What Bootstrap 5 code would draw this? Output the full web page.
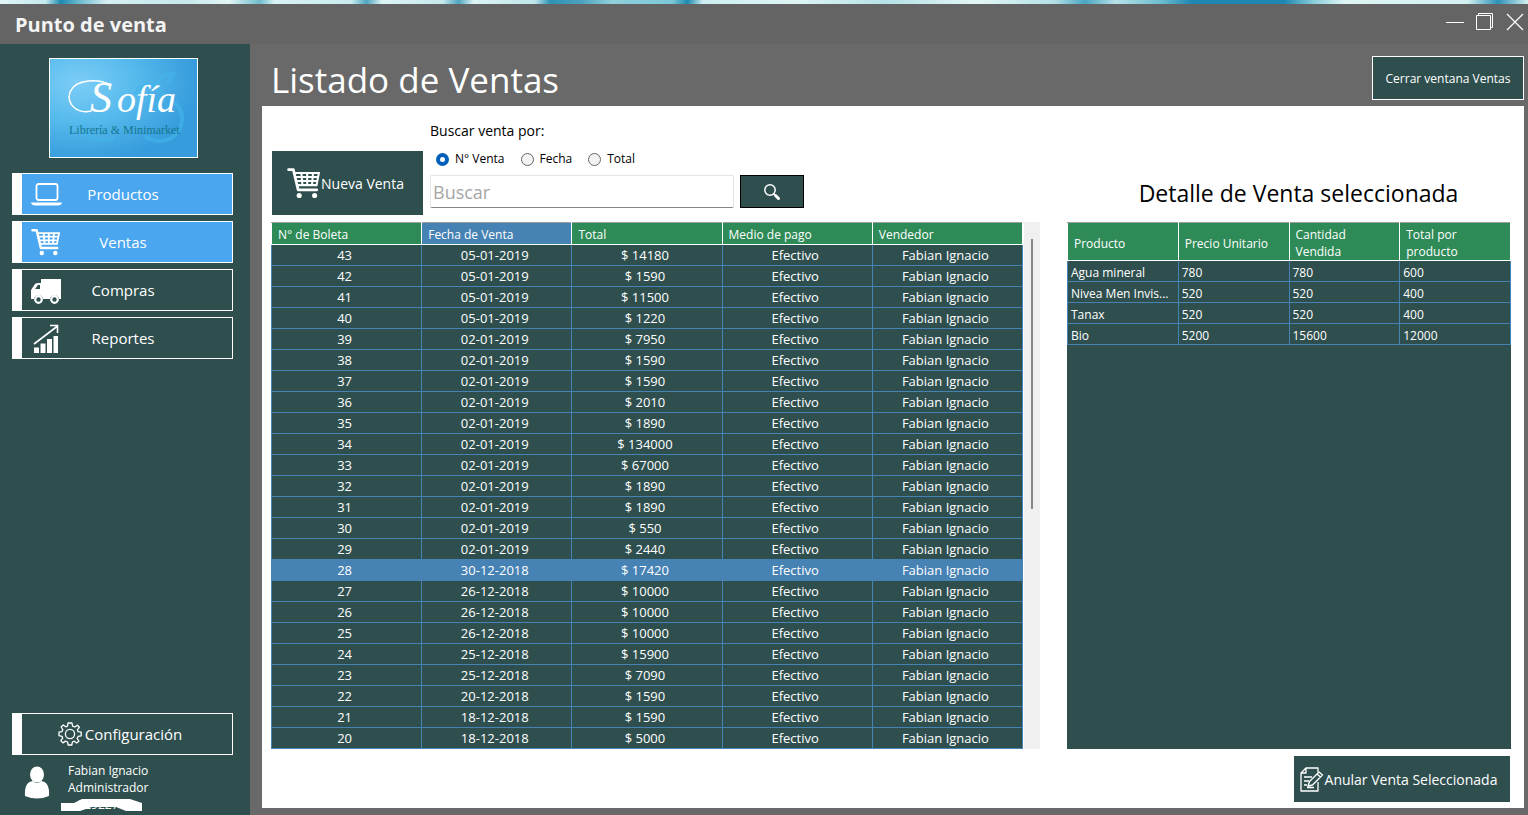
<!DOCTYPE html>
<html lang="es">
<head>
<meta charset="utf-8">
<meta name="viewport" content="width=device-width, initial-scale=1">
<title>Punto de venta</title>
<link href="https://cdn.jsdelivr.net/npm/bootstrap@5.3.0/dist/css/bootstrap.min.css" rel="stylesheet">
<style>
:root{--slate:#2f4f4f;--steel:#4682b4;--sea:#2e8b57;--dim:#696969}
body{font-family:"Open Sans","Noto Sans",sans-serif;font-size:13px;line-height:17px;background:var(--dim);color:#fff}
button,input{font-family:inherit}
.wallpaper{height:4px;background:linear-gradient(100deg,#e2f6f8 0,#c4e9ee 3%,#1f88b0 4%,#5fb4cb 5%,#d5f0f2 7%,#c6e8ec 12%,#e2f5f5 15%,#6fbccd 17%,#d9f3f4 18%,#c9ecee 23%,#4ea5c0 24%,#def4f5 25%,#c5e8ec 29%,#4ea5c0 30%,#def4f5 31%,#bfe6ea 35%,#2f93b8 36%,#4a9fbc 38%,#8fd0dc 40%,#7cc8d8 44%,#1f88b0 45%,#cdeff1 46%,#dff5f5 52%,#b5e2e7 58%,#e4f6f6 64%,#b2e0e6 69%,#49a5c2 71%,#b7e2e8 73%,#6bbccf 76%,#1d87b2 78%,#1d87b2 84%,#8ccfdb 86%,#dff5f5 88%,#d4f1f2 96%,#2f91b6 98%,#d4f1f2 100%)}
.titlebar{height:40px;background:#646464;padding:0 3px 0 15px}
.titlebar h1{font-size:20px;line-height:28px;font-weight:700;color:#f4f4f4;padding-top:1px}
.win-btn{width:20px;height:20px;padding:0;border:0;background:none;color:#fff}
.win-btn svg,.side-btn svg,.act-btn svg,.logo-box svg{display:block}
.win-row{gap:10px;padding-bottom:4px}
.sidebar{width:250px;background:var(--slate);padding:14px 17px 0 12px}
.logo-box{width:149px;height:100px;margin:0 auto 15px 37px}
.side-nav{gap:6px}
.side-btn{width:100%;height:42px;background:var(--slate);border:1px solid #fff;border-left-width:10px;border-radius:0;color:#fff;font-size:15px;line-height:20px;padding:0 8px}
.side-btn.on{background:#4aa6ee}
.side-btn .lbl{flex:1;text-align:center;padding-right:40px}
.side-btn.config{padding-right:22px;gap:3px}
.user-info{font-size:12px;height:53px}
.user-row{margin-top:7px}
.user-id{position:relative}
.user-id svg{position:absolute;left:-8px;top:3px}
.content{padding:0 4px 7px 12px}
.page-head{height:62px;padding:4px 0 0 9px}
.page-head h2{font-size:35px;line-height:48px;font-weight:400}
.act-btn{background:var(--slate);color:#fff;border:0;border-radius:0;padding:0}
.close-btn{width:152px;height:44px;border:1px solid #fff;font-size:12px}
.panel{background:#fff;color:#000;padding:16px 13px 6px 9px;gap:27px}
.sales{flex:769 1 0;min-width:0}
.detail{flex:444 1 0;min-width:0}
.tools{height:100px;padding:0 0 7px 1px;gap:7px}
.new-btn{width:151px;height:64px;font-size:14px;padding-right:4px}
.find-block{margin-bottom:7px}
.find-label{font-size:14px;line-height:20px}
.opts{gap:16px;padding:10px 0 8px 6px;line-height:16px}
.opts label{gap:6px;font-size:12px}
.opts input{appearance:none;width:13px;height:13px;margin:0;border:1px solid #666;border-radius:50%;background:#f3f3f3}
.opts input:checked{border:4px solid #005fb8;background:#fff}
.find-row{gap:6px}
.find-box{width:304px;height:33px;font-size:18px;padding:0 2px;border:1px solid #e5e5e5;border-bottom-color:#868686;border-radius:2px;color:#000}
.find-box::placeholder{color:#a6a6a6;opacity:1}
.find-btn{width:64px;height:33px;border:1px solid #000}
.grid{width:100%;table-layout:fixed;border-collapse:collapse;color:#fff;background:var(--slate)}
.grid th{height:22px;padding:2px 6px 0;font-size:12px;font-weight:400;background:var(--sea);border:1px solid #fff;border-top-color:#a0a0a0}
.grid th.sorted{background:var(--steel)}
.grid td{height:21px;padding:0 3px;line-height:20px;border:1px solid var(--steel);overflow:hidden;white-space:nowrap;text-overflow:ellipsis}
.sales td{text-align:center;padding:0 6px 0 2px}
.grid tr.sel td{background:var(--steel)}
.track{width:17px;background:#f0f0f0;border-left:1px solid #fff;padding-top:17px}
.thumb{width:2px;height:53%;background:#868686;margin-left:7px}
.detail h3{height:100px;font-size:23px;line-height:30px;font-weight:400;padding:56px 0 0 19px}
.detail .grid th{height:38px;line-height:17px;padding-top:3px}
.detail .grid td{font-size:12px;line-height:17px;padding-top:3px}
.fill{background:var(--slate)}
.void-btn{width:216px;height:46px;font-size:14px;margin-right:1px;padding-right:8px;white-space:nowrap}
.foot{padding-top:7px}
</style>
</head>
<body class="d-flex flex-column min-vh-100">
<svg width="0" height="0" class="position-absolute" aria-hidden="true">
  <symbol id="cart" viewBox="0 0 32 30">
    <path d="M1.500 2.500H6L10.500 21.500H28" fill="none" stroke="currentColor" stroke-width="2.600" stroke-linecap="round" stroke-linejoin="round"/>
    <path d="M6.500 5.500H30L27.800 17H9.200M8 9.300H29M8.800 13.200H28.500M13.500 5.500L14.500 17M19 5.500V17M24.500 5.500L23.500 17" fill="none" stroke="currentColor" stroke-width="1.900"/>
    <circle cx="11.500" cy="26.800" r="2.400" fill="currentColor"/><circle cx="26" cy="26.800" r="2.400" fill="currentColor"/>
  </symbol>
</svg>
<div class="wallpaper"></div>
<header class="titlebar d-flex align-items-center justify-content-between">
  <h1 class="m-0">Punto de venta</h1>
  <div class="win-row d-flex align-items-center">
    <button class="win-btn" aria-label="Minimizar"><svg width="20" height="20" stroke="#fff" fill="none"><path d="M1 10.500H19"/></svg></button>
    <button class="win-btn" aria-label="Restaurar"><svg width="20" height="20" stroke="#fff" fill="none"><path d="M1.500 3.500H15.500V17.500H1.500zM3.500 3.500V1.500H17.500V15.500H15.500"/></svg></button>
    <button class="win-btn" aria-label="Cerrar"><svg width="20" height="20" stroke="#fff" fill="none" stroke-width="1.200"><path d="M2 2L18 18M18 2L2 18"/></svg></button>
  </div>
</header>
<div class="d-flex flex-grow-1">
  <aside class="sidebar d-flex flex-column flex-shrink-0">
    <div class="logo-box">
      <svg width="149" height="100" viewBox="0 0 149 100" role="img" aria-label="Sofía Librería y Minimarket">
        <defs>
          <radialGradient id="sky" cx=".2" cy=".25" r=".8"><stop offset="0" stop-color="#7ccdf6"/><stop offset=".5" stop-color="#55b9ec"/><stop offset="1" stop-color="#369cdc"/></radialGradient>
        </defs>
        <rect x=".5" y=".5" width="148" height="99" fill="url(#sky)" stroke="#fff"/>
        <g fill="none" stroke="#45b5ea" stroke-width="4" opacity=".6"><path d="M106 28Q112 15 124 16L119 26M122 42Q139 53 130 72Q119 90 96 79"/><path d="M86 36Q97 20 112 32Q120 44 104 54M32 67Q43 87 66 80"/></g>
        <path d="M62 27C50 21 27 20 21 34C17 47 29 56 42 53" fill="none" stroke="#fff" stroke-width="1.500" stroke-linecap="round"/>
        <text y="54" fill="#fff" font-family="Liberation Serif,serif" font-style="italic" font-size="38"><tspan x="41" font-size="44">S</tspan><tspan x="68">ofía</tspan></text>
        <text x="20" y="76" fill="#14768f" font-family="Liberation Serif,serif" font-size="12">Librería &amp; Minimarket</text>
      </svg>
    </div>
    <nav class="side-nav d-grid">
      <button class="side-btn on d-flex align-items-center"><svg width="32" height="30" fill="none" stroke="#fff"><rect x="6.500" y="5" width="21" height="16" rx="2" stroke-width="1.800"/><path d="M1 23.500H32V24Q31 26.500 28 26.500H5Q2 26.500 1 24z" fill="#fff" stroke="none"/></svg><span class="lbl">Productos</span></button>
      <button class="side-btn on d-flex align-items-center"><svg width="32" height="28"><use href="#cart"/></svg><span class="lbl">Ventas</span></button>
      <button class="side-btn d-flex align-items-center"><svg width="32" height="30"><path d="M11 4H31V24H29A4.600 4.600 0 0 0 20 24H13A4.600 4.600 0 0 0 4 24H1V15L5 9Q6 8 8 8H11zM5 14H10V10H8z" fill="#fff" fill-rule="evenodd"/><g fill="none" stroke="#fff" stroke-width="2.200"><circle cx="8.500" cy="24.500" r="3.300"/><circle cx="24.500" cy="24.500" r="3.300"/></g></svg><span class="lbl">Compras</span></button>
      <button class="side-btn d-flex align-items-center"><svg width="32" height="30"><path d="M4 24.500H9V30H4zM10.500 20.500H15.500V30H10.500zM17 16H22V30H17zM23.500 13H28V30H23.500z" fill="#fff"/><path d="M4 21L27 3.500M20 2.500H27.500V10" fill="none" stroke="#fff" stroke-width="1.600"/></svg><span class="lbl">Reportes</span></button>
    </nav>
    <div class="mt-auto">
      <button class="side-btn config d-flex align-items-center justify-content-center"><svg width="24" height="24" viewBox="0 0 24 24" fill="none" stroke="#fff" stroke-width="1.300" stroke-linejoin="round"><circle cx="12" cy="12" r="4.600"/><path d="M10 1H14L14.600 4.100L16.800 5L19.400 3.200L21.300 5.300L19.400 7.800L20.100 9.700L23.200 10.200V13.800L20.100 14.400L19.200 16.500L20.900 19.200L18.700 21L16.200 19.200L14.400 20L13.800 23H10.200L9.600 20L7.500 19.100L4.900 20.900L2.900 18.700L4.700 16.200L4 14.300L1 13.700V10.200L4 9.600L4.800 7.500L3.100 5L5.300 3L7.800 4.800L9.500 4.100z"/></svg>Configuración</button>
      <div class="user-row d-flex">
        <svg width="56" height="45" class="flex-shrink-0" fill="#fff"><ellipse cx="25" cy="12.500" rx="7" ry="8"/><path d="M13 34Q12 20 21 19Q25 23 29 19Q38 20 37 34Q25 39 13 34z"/></svg>
        <div class="user-info">
          <div>Fabian Ignacio</div><div>Administrador</div>
          <div class="user-id"><span>&nbsp;&nbsp;&nbsp;029227</span><svg width="84" height="14"><path d="M1 4H14L22 0H70L82 4V12H66L56 8H32L20 12H1z" fill="#fff"/></svg></div>
        </div>
      </div>
    </div>
  </aside>
  <main class="content flex-grow-1 d-flex flex-column">
    <div class="page-head d-flex justify-content-between align-items-start">
      <h2 class="m-0 pt-2">Listado de Ventas</h2>
      <button class="act-btn close-btn mt-2">Cerrar ventana Ventas</button>
    </div>
    <div class="panel d-flex flex-grow-1">
      <section class="sales">
        <form class="tools d-flex align-items-end">
          <button type="button" class="act-btn new-btn d-flex align-items-center justify-content-center"><svg width="34" height="32"><use href="#cart"/></svg>Nueva Venta</button>
          <div class="find-block">
            <label for="q" class="find-label d-block">Buscar venta por:</label>
            <div class="opts d-flex">
              <label class="d-flex align-items-center"><input type="radio" name="by" checked>N° Venta</label>
              <label class="d-flex align-items-center"><input type="radio" name="by">Fecha</label>
              <label class="d-flex align-items-center"><input type="radio" name="by">Total</label>
            </div>
            <div class="find-row d-flex">
              <input id="q" type="text" class="find-box" placeholder="Buscar">
              <button type="button" class="act-btn find-btn d-flex align-items-center justify-content-center" aria-label="Buscar"><svg width="18" height="18" fill="none" stroke="#fff"><circle cx="7" cy="7" r="5.200" stroke-width="1.500"/><path d="M10.500 10.500L12 12" stroke-width="1.500"/><path d="M12.500 12.500L15.500 15.500" stroke-width="3" stroke-linecap="round"/></svg></button>
            </div>
          </div>
        </form>
        <div class="d-flex">
          <table class="grid flex-grow-1">
            <thead><tr><th>N° de Boleta</th><th class="sorted">Fecha de Venta</th><th>Total</th><th>Medio de pago</th><th>Vendedor</th></tr></thead>
            <tbody>
              <tr><td>43</td><td>05-01-2019</td><td>$ 14180</td><td>Efectivo</td><td>Fabian Ignacio</td></tr>
              <tr><td>42</td><td>05-01-2019</td><td>$ 1590</td><td>Efectivo</td><td>Fabian Ignacio</td></tr>
              <tr><td>41</td><td>05-01-2019</td><td>$ 11500</td><td>Efectivo</td><td>Fabian Ignacio</td></tr>
              <tr><td>40</td><td>05-01-2019</td><td>$ 1220</td><td>Efectivo</td><td>Fabian Ignacio</td></tr>
              <tr><td>39</td><td>02-01-2019</td><td>$ 7950</td><td>Efectivo</td><td>Fabian Ignacio</td></tr>
              <tr><td>38</td><td>02-01-2019</td><td>$ 1590</td><td>Efectivo</td><td>Fabian Ignacio</td></tr>
              <tr><td>37</td><td>02-01-2019</td><td>$ 1590</td><td>Efectivo</td><td>Fabian Ignacio</td></tr>
              <tr><td>36</td><td>02-01-2019</td><td>$ 2010</td><td>Efectivo</td><td>Fabian Ignacio</td></tr>
              <tr><td>35</td><td>02-01-2019</td><td>$ 1890</td><td>Efectivo</td><td>Fabian Ignacio</td></tr>
              <tr><td>34</td><td>02-01-2019</td><td>$ 134000</td><td>Efectivo</td><td>Fabian Ignacio</td></tr>
              <tr><td>33</td><td>02-01-2019</td><td>$ 67000</td><td>Efectivo</td><td>Fabian Ignacio</td></tr>
              <tr><td>32</td><td>02-01-2019</td><td>$ 1890</td><td>Efectivo</td><td>Fabian Ignacio</td></tr>
              <tr><td>31</td><td>02-01-2019</td><td>$ 1890</td><td>Efectivo</td><td>Fabian Ignacio</td></tr>
              <tr><td>30</td><td>02-01-2019</td><td>$ 550</td><td>Efectivo</td><td>Fabian Ignacio</td></tr>
              <tr><td>29</td><td>02-01-2019</td><td>$ 2440</td><td>Efectivo</td><td>Fabian Ignacio</td></tr>
              <tr class="sel"><td>28</td><td>30-12-2018</td><td>$ 17420</td><td>Efectivo</td><td>Fabian Ignacio</td></tr>
              <tr><td>27</td><td>26-12-2018</td><td>$ 10000</td><td>Efectivo</td><td>Fabian Ignacio</td></tr>
              <tr><td>26</td><td>26-12-2018</td><td>$ 10000</td><td>Efectivo</td><td>Fabian Ignacio</td></tr>
              <tr><td>25</td><td>26-12-2018</td><td>$ 10000</td><td>Efectivo</td><td>Fabian Ignacio</td></tr>
              <tr><td>24</td><td>25-12-2018</td><td>$ 15900</td><td>Efectivo</td><td>Fabian Ignacio</td></tr>
              <tr><td>23</td><td>25-12-2018</td><td>$ 7090</td><td>Efectivo</td><td>Fabian Ignacio</td></tr>
              <tr><td>22</td><td>20-12-2018</td><td>$ 1590</td><td>Efectivo</td><td>Fabian Ignacio</td></tr>
              <tr><td>21</td><td>18-12-2018</td><td>$ 1590</td><td>Efectivo</td><td>Fabian Ignacio</td></tr>
              <tr><td>20</td><td>18-12-2018</td><td>$ 5000</td><td>Efectivo</td><td>Fabian Ignacio</td></tr>
            </tbody>
          </table>
          <div class="track flex-shrink-0"><div class="thumb"></div></div>
        </div>
      </section>
      <section class="detail d-flex flex-column">
        <h3 class="m-0 text-center">Detalle de Venta seleccionada</h3>
        <div class="fill flex-grow-1">
          <table class="grid">
            <thead><tr><th>Producto</th><th>Precio Unitario</th><th>Cantidad Vendida</th><th>Total por producto</th></tr></thead>
            <tbody>
              <tr><td>Agua mineral</td><td>780</td><td>780</td><td>600</td></tr>
              <tr><td>Nivea Men Invis...</td><td>520</td><td>520</td><td>400</td></tr>
              <tr><td>Tanax</td><td>520</td><td>520</td><td>400</td></tr>
              <tr><td>Bio</td><td>5200</td><td>15600</td><td>12000</td></tr>
            </tbody>
          </table>
        </div>
        <div class="foot d-flex justify-content-end">
          <button class="act-btn void-btn d-flex align-items-center justify-content-center"><svg width="26" height="28" class="flex-shrink-0" fill="none" stroke="#fff" stroke-width="1.300" stroke-linejoin="round"><path d="M19 7V3H7L2 8V26H19V17M7 3V8H2M5 12H13M5 16H10M5 20H8"/><path d="M9 21L10.500 16.500L20 7L23.500 10L13.500 20zM18 9L21.500 12M8 22.500H15"/></svg><span>Anular Venta Seleccionada</span></button>
        </div>
      </section>
    </div>
  </main>
</div>
<script src="https://cdn.jsdelivr.net/npm/bootstrap@5.3.0/dist/js/bootstrap.bundle.min.js"></script>
</body>
</html>
